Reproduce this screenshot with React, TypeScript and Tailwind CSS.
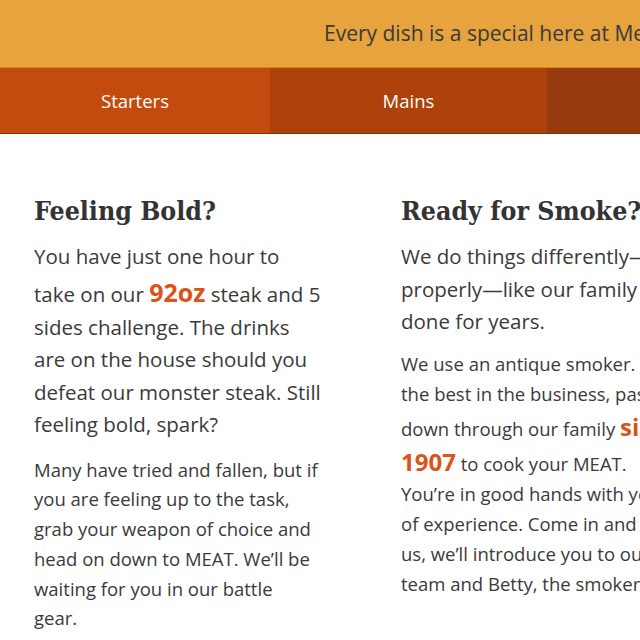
export default function App() {
  const body = { fontFamily: "'Open Sans', Lato, sans-serif" };
  const serif = { fontFamily: "'DejaVu Serif Condensed', 'DejaVu Serif', serif" };
  return (
    <div className="w-[640px] h-[640px] overflow-hidden bg-white" style={body}>
      <div className="w-[1100px]">
        <div className="h-[67px] bg-[#e6a33e] flex items-center">
          <div className="pl-[324px] text-[21px] text-[#3a3a3a] whitespace-nowrap">
            Every dish is a special here at Meat. Try one of our many house specials.
          </div>
        </div>
        <div className="flex h-[67px] border-t border-[#d7860f] border-b border-b-[#8a3009] text-white text-[18.5px]">
          <div className="w-[270px] bg-[#c44b0e] flex items-center justify-center">Starters</div>
          <div className="w-[277px] bg-[#ad400b] flex items-center justify-center">Mains</div>
          <div className="w-[276px] bg-[#973a0e] flex items-center justify-center">Sides</div>
          <div className="flex-1 bg-[#7f310c] flex items-center justify-center">Desserts</div>
        </div>
        <div className="flex pt-[57px] text-[#3a3a3a]">
          <div className="w-[367px] pl-[34px] pr-[33px]">
            <h2 className="text-[26.5px] font-bold text-[#333] leading-[40px] whitespace-nowrap" style={serif}>Feeling Bold?</h2>
            <p className="text-[20.5px] leading-[32.5px] mt-[9px] whitespace-nowrap">
              You have just one hour to<br />take on our{" "}
              <span className="text-[#d9541a] font-bold text-[25px] leading-[38px]">92oz</span> steak and 5<br />sides challenge. The drinks<br />are on the house should you<br />defeat our monster steak. Still<br />feeling bold, spark?
            </p>
            <p className="text-[18.5px] leading-[29.8px] mt-[14px] whitespace-nowrap">
              Many have tried and fallen, but if<br />you are feeling up to the task,<br />grab your weapon of choice and<br />head on down to MEAT. We’ll be<br />waiting for you in our battle<br />gear.
            </p>
          </div>
          <div className="w-[367px] pl-[34px] pr-[33px]">
            <h2 className="text-[26.5px] font-bold text-[#333] leading-[40px] whitespace-nowrap" style={serif}>Ready for Smoke?</h2>
            <p className="text-[20.5px] leading-[32.5px] mt-[9px] whitespace-nowrap">
              We do things differently—<br />properly—like our family has<br />done for years.
            </p>
            <p className="text-[18.5px] leading-[30px] mt-[11px] whitespace-nowrap">
              We use an antique smoker. It’s<br />the best in the business, passed<br />down through our family{" "}
              <span className="text-[#d9541a] font-bold text-[24px] leading-[35px]">since<br />1907</span> to cook your MEAT.<br />You’re in good hands with years<br />of experience. Come in and join<br />us, we’ll introduce you to our<br />team and Betty, the smoker.
            </p>
          </div>
          <div className="w-[366px] pl-[34px] pr-[33px]">
            <h2 className="text-[26.5px] font-bold text-[#333] leading-[40px]" style={serif}>House Rules</h2>
          </div>
        </div>
      </div>
    </div>
  );
}
